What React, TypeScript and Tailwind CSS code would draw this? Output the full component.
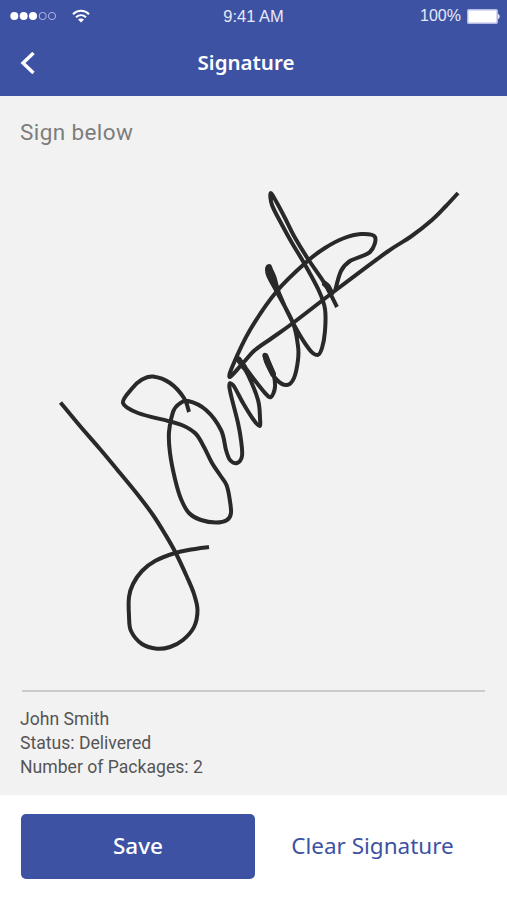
import React from "react";

type Point = [number, number];

const strokes: Point[][] = [
    // J
    [
        [60.5, 402.5], [80, 426], [100, 449], [120, 473], [138, 495], [153, 515], [165, 534], [175.5, 552.5],
        [187, 577], [194, 594], [197.5, 610], [194, 627], [183, 640], [170, 647], [157, 648.7], [142, 644],
        [131, 631], [129, 616], [129, 597], [133, 584], [142, 571], [155, 561], [175, 553], [191, 549.5], [209, 547],
    ],
    // S, m and the first two strokes of i and t
    [
        [189, 412], [184, 398], [170, 383], [153, 376.5], [142, 379.5], [132, 388.5], [123, 403], [138, 413],
        [170, 421.5], [184, 426], [196, 434], [204, 447], [212, 463], [220, 475], [226.5, 485], [229.5, 498],
        [231, 513], [227, 520], [216, 522.5], [201, 520], [189, 513], [181, 499], [175, 479], [170, 453],
        [169, 432], [173, 412], [179, 404], [188, 401], [206, 410], [221, 430], [226, 450], [230, 460],
        [237, 463], [242, 456], [241, 440], [238, 423], [229.5, 388], [233, 385], [243, 403], [253, 419],
        [259.5, 426], [260, 418], [258, 400], [248, 375], [238, 358], [253, 378], [265, 393], [271, 397],
        [275, 387], [273, 373], [265, 355], [267, 364], [277, 380], [287, 385], [294, 378], [298, 360],
        [298, 346], [293, 323], [278, 294], [268, 275], [268, 267], [274, 276], [279, 293], [293, 323],
        [309, 349], [317.5, 355], [322, 348], [325, 331], [325, 309], [319, 291], [304, 263], [292, 243], [281, 223],
        [272, 205], [270.7, 193], [277, 203], [285, 218], [294, 236], [308, 259], [325, 284], [337, 307],
    ],
    // cross bar and h
    [
        [458, 193], [446, 206], [432, 220], [411, 236.5], [387, 252], [336, 290], [293, 323], [272, 338], [255, 350],
        [243, 363], [230, 377], [233, 365], [250, 330], [277, 291], [307, 261.5], [325, 248], [343, 238.5], [361, 234],
        [375, 237], [370, 252], [350, 261], [341, 271], [335, 291],
    ],
    // thick touches
    [[269, 267], [272, 276], [275, 285]],
    [[265.5, 356], [269, 365], [273, 374]],
    [[325, 284], [328, 287], [331, 293]],
    [[239, 360], [244, 367]],
];

// Catmull-Rom spline through the captured points
const toPath = (points: Point[]) => {
    let d = `M${points[0][0]} ${points[0][1]}`;
    for (let i = 0; i < points.length - 1; i++) {
        const p0 = points[i - 1] ?? points[i];
        const p1 = points[i];
        const p2 = points[i + 1];
        const p3 = points[i + 2] ?? p2;
        d += `C${p1[0] + (p2[0] - p0[0]) / 6} ${p1[1] + (p2[1] - p0[1]) / 6} `;
        d += `${p2[0] - (p3[0] - p1[0]) / 6} ${p2[1] - (p3[1] - p1[1]) / 6} ${p2[0]} ${p2[1]}`;
    }
    return d;
};

const StatusBar: React.FC = () => (
    <div className="grid h-8 grid-cols-3 items-center pl-[10px] pr-[7px] font-['Liberation_Sans',sans-serif] text-base text-[#e6e9f8]">
        <div className="flex items-center gap-[15px]">
            <svg width="47" height="10" viewBox="0 0 47 10">
                <circle cx="4.3" cy="5" r="4" fill="#fff" />
                <circle cx="13.7" cy="5" r="4" fill="#fff" />
                <circle cx="23" cy="5" r="4" fill="#fff" />
                <circle cx="32.7" cy="5" r="3.6" fill="none" stroke="#aeb6e0" />
                <circle cx="42" cy="5" r="3.6" fill="none" stroke="#aeb6e0" />
            </svg>
            <svg width="18" height="14" viewBox="0 0 18 14" fill="none" stroke="#fff" strokeWidth="2">
                <path d="M1 5.2C5.5 0.6 12.5 0.6 17 5.2" />
                <path d="M4 8.3C7 5.4 11 5.4 14 8.3" />
                <path d="M9 13.5L6 10.6C7.8 9 10.2 9 12 10.6Z" fill="#fff" stroke="none" />
            </svg>
        </div>
        <span className="pr-[3px] text-center text-[16.5px]">9:41 AM</span>
        <div className="flex items-center justify-end gap-[5px]">
            <span>100%</span>
            <svg width="34" height="15" viewBox="0 0 34 15">
                <rect x="1.7" y="0.7" width="29.5" height="13.6" rx="1" fill="#fff" stroke="#b5bce4" strokeWidth="1.4" />
                <path d="M32 5C34.3 5.5 34.3 9.5 32 10Z" fill="#dfe3f5" />
            </svg>
        </div>
    </div>
);

const App: React.FC = () => {
    return (
        <div className="flex h-[900px] w-[507px] flex-col bg-white">
            <header className="h-24 bg-[#3e52a3] text-white">
                <StatusBar />
                <div className="grid h-[62px] grid-cols-[1fr_auto_1fr] items-center pl-5 pr-[35px]">
                    <button aria-label="Back" className="w-fit">
                        <svg width="15" height="22" viewBox="0 0 15 22" fill="none" stroke="currentColor" strokeWidth="3.4">
                            <path d="M13.5 1L3 11L13.5 21" />
                        </svg>
                    </button>
                    <h1 className="pb-0.5 font-['Noto_Sans',sans-serif] text-[20.5px] font-semibold">Signature</h1>
                </div>
            </header>

            <main className="flex h-[699px] flex-col bg-[#f2f2f2] px-[21px] pt-[19px]">
                <p className="-ml-px h-[45px] font-['Roboto',sans-serif] text-[22.5px] leading-[34px] tracking-[0.4px] text-[#7d7d7d]">
                    Sign below
                </p>
                <svg
                    className="block shrink-0"
                    width="465"
                    height="530"
                    viewBox="21 160 465 530"
                    fill="none"
                    stroke="#292929"
                    strokeWidth="4"
                    strokeLinejoin="round"
                >
                    {strokes.map((points, i) => (
                        <path key={i} d={toPath(points)} strokeWidth={i > 2 ? 6 : undefined} strokeLinecap={i > 2 ? "round" : "butt"} />
                    ))}
                </svg>
                <div className="mx-px h-[2px] shrink-0 bg-[#cbcbcb]" />
                <div className="-ml-px pt-[15px] font-['Roboto',sans-serif] text-[17.6px] leading-6 text-[#555]">
                    <p>John Smith</p>
                    <p>Status: Delivered</p>
                    <p>Number of Packages: 2</p>
                </div>
            </main>

            <footer className="flex h-[105px] items-start gap-[4px] px-[21px] pt-[19px] font-['Noto_Sans',sans-serif] text-[22.5px]">
                <button className="h-[65px] w-[234px] rounded-[5px] bg-[#3e52a3] pb-0.5 font-medium text-white">Save</button>
                <button className="h-[65px] flex-1 pb-0.5 text-[#3e52a3]">Clear Signature</button>
            </footer>
        </div>
    );
};

export default App;
